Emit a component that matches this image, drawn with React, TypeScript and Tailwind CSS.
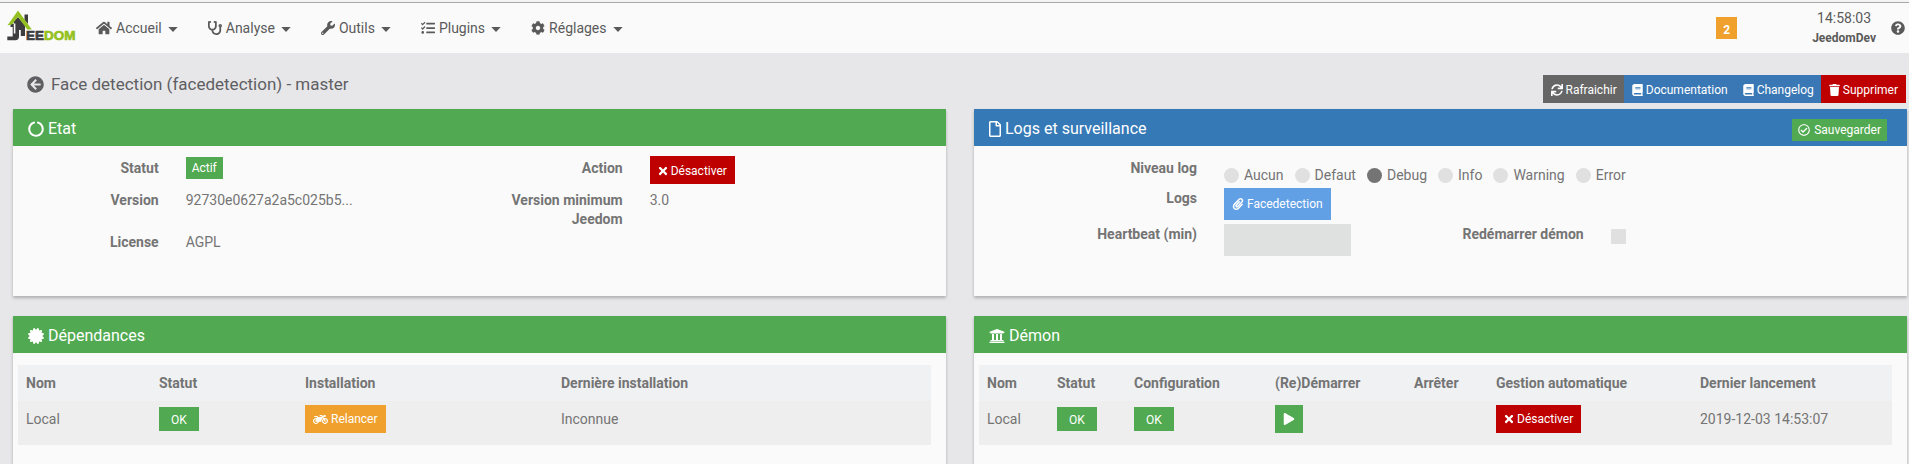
import type { ReactNode } from 'react';
import {
  FaArrowCircleLeft,
  FaBook,
  FaCertificate,
  FaCircleNotch,
  FaCog,
  FaHome,
  FaMotorcycle,
  FaPaperclip,
  FaPlay,
  FaQuestionCircle,
  FaRegCheckCircle,
  FaRegFile,
  FaStethoscope,
  FaSync,
  FaTasks,
  FaTimes,
  FaTrash,
  FaUniversity,
  FaWrench,
} from 'react-icons/fa';

const menus = [
  { label: 'Accueil', icon: <FaHome className="text-[16px]" /> },
  { label: 'Analyse', icon: <FaStethoscope /> },
  { label: 'Outils', icon: <FaWrench /> },
  { label: 'Plugins', icon: <FaTasks /> },
  { label: 'Réglages', icon: <FaCog /> },
];

const levels = ['Aucun', 'Defaut', 'Debug', 'Info', 'Warning', 'Error'];

function Logo() {
  return (
    <svg viewBox="0 0 70 32" className="h-8 w-[70px]" role="img" aria-label="Jeedom">
      <path d="M17.5 4.5H21V14l-3.5-4z" fill="#3d3d40" />
      <path d="M3.5 14.5L11 7l7 8.5V26h-4.200v-6h-1.800v6.500q0 3.700-3.700 3.700H.3v-3.700h5.400V17H3.500z" fill="#3d3d40" />
      <path d="M7.600 13.500v10" fill="none" stroke="#fafafa" strokeWidth="1.600" />
      <path d="M5 13h2" fill="none" stroke="#fafafa" strokeWidth="1.400" />
      <path d="M.4 15.500L11 .5 24.800 19.500h-4.600L11 6.800 5.200 14.200z" fill="#94c11f" />
      <text x="19" y="30" fontFamily="Liberation Sans, sans-serif" fontWeight="700" fontSize="13.5" strokeWidth="0.700">
        <tspan fill="#3d3d40" stroke="#3d3d40">EE</tspan>
        <tspan fill="#94c11f" stroke="#94c11f">DOM</tspan>
      </text>
    </svg>
  );
}

function Caret() {
  return (
    <svg viewBox="0 0 10 5" className="ml-0.5 mt-0.5 h-[5px] w-[10px]" aria-hidden="true">
      <path d="M.3 0h9.400L5 5z" fill="currentColor" />
    </svg>
  );
}

function Button({ color, icon, children, label, size = 'h-7 px-2' }: { color: string; icon?: ReactNode; children?: ReactNode; label?: string; size?: string }) {
  return (
    <button type="button" aria-label={label} className={`inline-flex items-center gap-[3px] text-[12px] leading-4 text-white ${size} ${color}`}>
      {icon}
      {children}
    </button>
  );
}

function Panel({
  title,
  icon,
  color,
  action,
  height = 'min-h-[150px]',
  children,
}: {
  title: string;
  icon: ReactNode;
  color: string;
  action?: ReactNode;
  height?: string;
  children: ReactNode;
}) {
  return (
    <section className="bg-[#fafafa] shadow-[0_2px_3px_rgba(0,0,0,0.25)]">
      <header className={`flex h-[37px] items-center justify-between pl-[15px] pr-5 text-white ${color}`}>
        <h2 className="flex items-center gap-1 pt-0.5 text-[16px] leading-5">
          {icon}
          {title}
        </h2>
        {action}
      </header>
      <div className={`pl-[5px] ${height}`}>{children}</div>
    </section>
  );
}

function Ok() {
  return <span className="inline-flex h-6 w-10 items-center justify-center bg-[#51aa51] pt-0.5 text-[12px] text-white">OK</span>;
}

function DataTable({ heads, cells }: { heads: { text: string; width: string }[]; cells: ReactNode[] }) {
  return (
    <div className="pt-3 pr-[15px]">
      <table className="w-full table-fixed">
        <thead>
          <tr className="h-9 bg-[#eff1f3]">
            {heads.map((h) => (
              <th key={h.text} scope="col" className={`px-2 text-left font-bold ${h.width}`}>
                {h.text}
              </th>
            ))}
          </tr>
        </thead>
        <tbody>
          <tr className="h-11 bg-[#eeeeee]">
            {cells.map((c, i) => (
              <td key={heads[i].text} className="px-2 pt-[3px] align-top">
                <div className="flex h-[30px] items-center">{c}</div>
              </td>
            ))}
          </tr>
        </tbody>
      </table>
    </div>
  );
}

export default function App() {
  return (
    <div className="min-h-screen bg-[#e7e7e9] font-[Roboto,sans-serif] text-[14px] leading-[19px] text-[#747474]">
      <div className="h-0.5 bg-[#f4f4f4]" />
      <nav className="flex h-[51px] items-center border-t border-[#a8a8a8] bg-[#fafafa] text-[#5a5a5a]">
        <a href="#accueil" className="ml-[7px] mr-[19px] pb-1">
          <Logo />
        </a>
        <ul className="flex items-center gap-[30px]">
          {menus.map((m) => (
            <li key={m.label}>
              <button type="button" className="flex items-center gap-1">
                {m.icon}
                {m.label}
                <Caret />
              </button>
            </li>
          ))}
        </ul>
        <div className="ml-auto flex items-center">
          <span className="mr-[75px] flex h-[22px] w-[21px] items-center justify-center bg-[#f0a02c] pt-1 text-[12px] font-bold text-white">2</span>
          <div className="mr-[15px] text-center">
            <div>14:58:03</div>
            <div className="pt-px text-[12px] font-bold">JeedomDev</div>
          </div>
          <a href="#aide" aria-label="Aide" className="mr-1">
            <FaQuestionCircle />
          </a>
        </div>
      </nav>

      <main className="pl-[13px] pr-[2px]">
        <div className="flex h-14 items-end justify-between pb-1.5 pl-[14px] pr-[1px]">
          <h1 className="flex items-center gap-[7px] pb-[7px] text-[17px] leading-6 text-[#5f5f63]">
            <a href="#retour" aria-label="Retour">
              <FaArrowCircleLeft />
            </a>
            Face detection (facedetection) - master
          </h1>
          <div className="flex">
            <Button color="bg-[#666666]" size="h-7 pt-px pl-2 pr-[7px]" icon={<FaSync />}>Rafraichir</Button>
            <Button color="bg-[#3a78b5]" size="h-7 pt-px pl-2 pr-[7px]" icon={<FaBook className="w-[11px]" />}>Documentation</Button>
            <Button color="bg-[#3a78b5]" size="h-7 pt-px pl-2 pr-[7px]" icon={<FaBook className="w-[11px]" />}>Changelog</Button>
            <Button color="bg-[#be0000]" size="h-7 pt-px px-2" icon={<FaTrash className="w-[11px]" />}>Supprimer</Button>
          </div>
        </div>

        <div className="grid grid-cols-2 gap-x-7 gap-y-5">
          <Panel title="Etat" color="bg-[#51aa51]" icon={<FaCircleNotch />}>
            <dl className="grid grid-cols-12 grid-rows-[32px_42px_32px] pt-[10px]">
              <dt className="col-span-2 px-[14px] pt-[3px] text-right font-bold">Statut</dt>
              <dd className="col-span-4 px-[13px]">
                <span className="mt-[1px] inline-flex h-[22px] items-center bg-[#51aa51] px-[6px] pt-px text-[12px] text-white">Actif</span>
              </dd>
              <dt className="col-span-2 px-[14px] pt-[3px] text-right font-bold">Action</dt>
              <dd className="col-span-4 px-[13px]">
                <Button color="bg-[#be0000]" size="h-7 pt-px px-2" icon={<FaTimes className="w-[10px]" />}>Désactiver</Button>
              </dd>
              <dt className="col-span-2 px-[14px] pt-[3px] text-right font-bold">Version</dt>
              <dd className="col-span-4 px-[13px] pt-[3px]">92730e0627a2a5c025b5...</dd>
              <dt className="col-span-2 px-[14px] pt-[3px] text-right font-bold">Version minimum Jeedom</dt>
              <dd className="col-span-4 px-[13px] pt-[3px]">3.0</dd>
              <dt className="col-span-2 px-[14px] pt-[3px] text-right font-bold">License</dt>
              <dd className="col-span-4 px-[13px] pt-[3px]">AGPL</dd>
            </dl>
          </Panel>

          <Panel
            title="Logs et surveillance"
            color="bg-[#3579b6]"
            icon={<FaRegFile className="w-3" />}
            action={<Button color="bg-[#51aa51]" size="h-[22px] px-[6px] mt-1 pt-px" icon={<FaRegCheckCircle className="mr-px" />}>Sauvegarder</Button>}
          >
            <form className="grid grid-cols-12 grid-rows-[32px_36px_32px] pt-[10px]">
              <span id="level" className="col-span-3 px-[14px] pt-[3px] text-right font-bold">Niveau log</span>
              <div role="radiogroup" aria-labelledby="level" className="col-span-9 flex gap-[11px] px-[13px] pt-[10px]">
                {levels.map((l) => (
                  <label key={l} className="flex h-[19px] items-center gap-[5px]">
                    <input
                      type="radio"
                      name="level"
                      defaultChecked={l === 'Debug'}
                      className="size-[15px] appearance-none rounded-full bg-[#e0e0e0] checked:bg-[#747474]"
                    />
                    {l}
                  </label>
                ))}
              </div>
              <span className="col-span-3 px-[14px] pt-[1px] text-right font-bold">Logs</span>
              <div className="col-span-9 px-[13px]">
                <Button color="bg-[#62a0e6]" size="h-8 px-2" icon={<FaPaperclip />}>Facedetection</Button>
              </div>
              <label htmlFor="heartbeat" className="col-span-3 px-[14px] pt-[1px] text-right font-bold">Heartbeat (min)</label>
              <div className="col-span-2 pl-[13px] pr-[15px]">
                <input id="heartbeat" type="text" className="block h-8 w-full bg-[#dfe0e0] px-2" />
              </div>
              <label htmlFor="restart" className="col-span-3 px-[14px] pt-[1px] text-right font-bold">Redémarrer démon</label>
              <div className="col-span-4 px-[13px] pt-[5px]">
                <input id="restart" type="checkbox" className="block size-[15px] appearance-none rounded-[1px] bg-[#e0e0e0] checked:bg-[#747474]" />
              </div>
            </form>
          </Panel>

          <Panel title="Dépendances" color="bg-[#51aa51]" height="min-h-[111px]" icon={<FaCertificate />}>
            <DataTable
              heads={[
                { text: 'Nom', width: 'w-[133px]' },
                { text: 'Statut', width: 'w-[146px]' },
                { text: 'Installation', width: 'w-[256px]' },
                { text: 'Dernière installation', width: '' },
              ]}
              cells={['Local', <Ok />, <Button color="bg-[#f0a02c]" icon={<FaMotorcycle className="text-[15px]" />}>Relancer</Button>, 'Inconnue']}
            />
          </Panel>

          <Panel title="Démon" color="bg-[#51aa51]" height="min-h-[111px]" icon={<FaUniversity />}>
            <DataTable
              heads={[
                { text: 'Nom', width: 'w-[70px]' },
                { text: 'Statut', width: 'w-[77px]' },
                { text: 'Configuration', width: 'w-[141px]' },
                { text: '(Re)Démarrer', width: 'w-[139px]' },
                { text: 'Arrêter', width: 'w-[82px]' },
                { text: 'Gestion automatique', width: 'w-[204px]' },
                { text: 'Dernier lancement', width: '' },
              ]}
              cells={[
                'Local',
                <Ok />,
                <Ok />,
                <Button color="bg-[#51aa51]" label="Démarrer" icon={<FaPlay />} />,
                '',
                <Button color="bg-[#be0000]" icon={<FaTimes className="w-[10px]" />}>Désactiver</Button>,
                '2019-12-03 14:53:07',
              ]}
            />
          </Panel>
        </div>
      </main>
    </div>
  );
}
